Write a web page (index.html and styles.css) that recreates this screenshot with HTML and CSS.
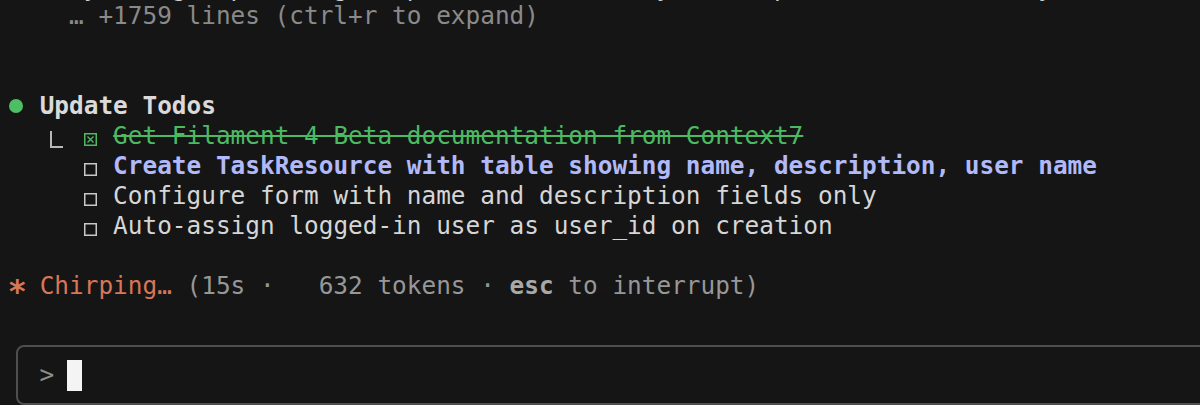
FILE: index.html
```html
<!DOCTYPE html>
<html lang="en">
<head>
<meta charset="utf-8">
<title>Terminal</title>
<link rel="stylesheet" href="styles.css">
</head>
<body>
<div class="term">
<div class="line prev">     y     g   p      g    p                y       p                 y</div>
<div class="line dim">    … +1759 lines (ctrl+r to expand)</div>
<div class="line"> </div>
<div class="line"> </div>
<div class="line"><span class="dot"></span><span class="head">Update Todos</span></div>
<div class="line"><span class="indent2"></span><span class="corner-cell"><span class="corner"></span></span><span class="box done"><svg width="13" height="13" viewBox="0 0 13 13"><rect x="0.75" y="0.75" width="11.5" height="11.5" fill="none" stroke="currentColor" stroke-width="1.5"/><path d="M3.5 3.5 L9.5 9.5 M9.5 3.5 L3.5 9.5" stroke="currentColor" stroke-width="1.4"/></svg></span> <span class="done strike">Get Filament 4 Beta documentation from Context7</span></div>
<div class="line">     <span class="box"><svg width="13" height="13" viewBox="0 0 13 13"><rect x="0.75" y="0.75" width="11.5" height="11.5" fill="none" stroke="currentColor" stroke-width="1.5"/></svg></span> <span class="active">Create TaskResource with table showing name, description, user name</span></div>
<div class="line">     <span class="box"><svg width="13" height="13" viewBox="0 0 13 13"><rect x="0.75" y="0.75" width="11.5" height="11.5" fill="none" stroke="currentColor" stroke-width="1.5"/></svg></span> <span class="todo">Configure form with name and description fields only</span></div>
<div class="line">     <span class="box"><svg width="13" height="13" viewBox="0 0 13 13"><rect x="0.75" y="0.75" width="11.5" height="11.5" fill="none" stroke="currentColor" stroke-width="1.5"/></svg></span> <span class="todo">Auto-assign logged-in user as user_id on creation</span></div>
<div class="line"> </div>
<div class="line"><span class="spin"><b class="star">*</b> Chirping…</span><span class="meta"> (15s ·   632 tokens · <b class="key">esc</b> to interrupt)</span></div>
<div class="line"> </div>
</div>
<div class="input">
<span class="prompt">&gt;</span><span class="cursor"></span>
</div>
</body>
</html>
```

FILE: styles.css
```css
html, body {
  margin: 0;
  padding: 0;
  background: #151515;
  overflow: hidden;
}

body {
  width: 1200px;
  height: 405px;
  font-family: "DejaVu Sans Mono", "Liberation Mono", monospace;
  font-size: 24.4px;
  color: #d4d4d4;
}

.term {
  padding: 1px 0 0 10.3px;
}

.line {
  height: 30px;
  line-height: 30px;
  white-space: pre;
  box-sizing: border-box;
}

.line.prev {
  margin-top: -30px;
  padding-top: 2px;
  color: #d0d0d0;
}

.dim {
  color: #8a8a8a;
}

.dot {
  display: inline-block;
  width: 14px;
  height: 14px;
  border-radius: 50%;
  background: #4cbf64;
  margin-left: -1px;
  margin-right: 16.4px;
  vertical-align: 1px;
}

.head {
  font-weight: bold;
  color: #dadada;
}

.indent2 {
  display: inline-block;
  width: 29.38px;
}

.corner-cell {
  display: inline-block;
  width: 44.07px;
  height: 17px;
  padding-left: 10px;
  box-sizing: border-box;
  vertical-align: -3.6px;
}

.corner {
  display: block;
  width: 11px;
  height: 15px;
  border-left: 2px solid #b8b8b8;
  border-bottom: 2px solid #b8b8b8;
}

.box {
  display: inline-block;
  width: 14.69px;
  color: #c8c8c8;
  vertical-align: -1.5px;
  line-height: 0;
}

.box svg {
  display: block;
}

.box.done {
  color: #4cb963;
}

.done.strike {
  color: #4cb963;
  text-decoration: line-through;
  text-decoration-thickness: 2px;
}

.active {
  font-weight: bold;
  color: #b1b9f9;
}

.todo {
  color: #d6d6d6;
}

.spin {
  color: #d77757;
}

.star {
  display: inline-block;
  width: 14.69px;
  font-weight: bold;
  text-align: center;
  transform: translateY(6px) scale(1.3);
}

.meta {
  color: #979797;
}

.key {
  font-weight: bold;
  color: #a8a8a8;
}

.input {
  margin: 14px -20px 0 16px;
  height: 60px;
  box-sizing: border-box;
  border: 2px solid #4e4e4e;
  border-radius: 8px;
  display: flex;
  align-items: center;
  padding-left: 21.6px;
}

.prompt {
  color: #8d8d8d;
  line-height: 30px;
  width: 14.69px;
}

.cursor {
  display: block;
  margin-left: 12.7px;
  width: 15px;
  height: 31px;
  background: #f4f4f4;
}
```
